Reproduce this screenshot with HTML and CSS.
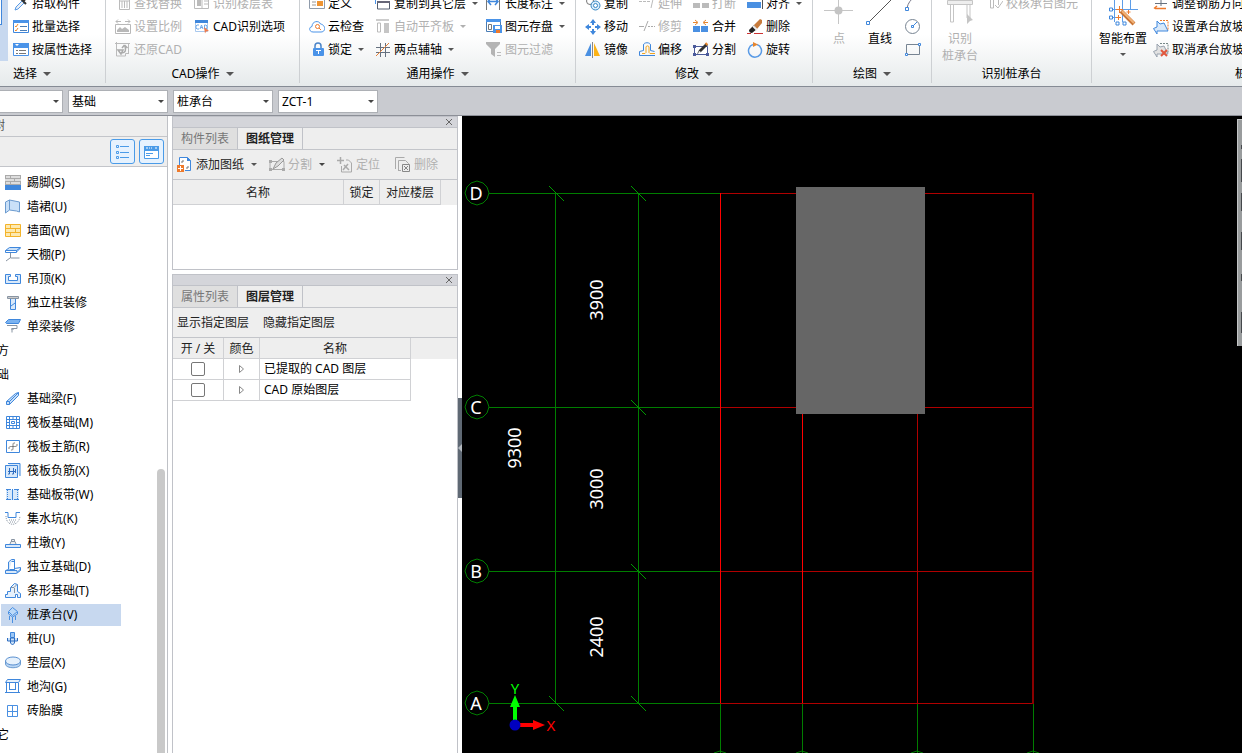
FILE: index.html
```html
<!DOCTYPE html>
<html lang="zh-CN">
<head>
<meta charset="utf-8">
<title>CAD</title>
<link rel="stylesheet" href="styles.css">
</head>
<body>
<svg class="sprite" aria-hidden="true">
<symbol id="pick" viewBox="0 0 16 16"><path d="M2 14l1-3 6-6 2 2-6 6z" fill="#e8eef6" stroke="#5a9be6"/><path d="M8 3l5 5M10 6l3-4" stroke="#333" stroke-width="2"/></symbol>
<symbol id="batch" viewBox="0 0 16 16"><path d="M.5 1.500h15v12H.5z" fill="#fff" stroke="#3f87dc"/><path d="M0 1h16v3H0z" fill="#4a93e8"/><path d="M2 7l1 1 2-3M2 11l1 1 2-3" fill="none" stroke="#ef8a2a"/><path d="M7 7.500h7M7 11.500h7" stroke="#4a7db5"/></symbol>
<symbol id="attr" viewBox="0 0 16 16"><path d="M.5 1.500h15v12H.5z" fill="#fff" stroke="#4a93e8"/><path d="M0 1h16v5H0z" fill="#4a93e8"/><path d="M2 2h4L4 4z" fill="#fff"/><path d="M3 8.500h2M6 8.500h7M3 11.500h2M6 11.500h7" stroke="#777"/></symbol>
<symbol id="find" viewBox="0 0 16 16"><path d="M4.500 1.500h10v12h-10zM7 5v7M9.500 5v7M12 5v7M5 5h9" fill="none" stroke="#bbb"/></symbol>
<symbol id="scale" viewBox="0 0 16 16"><path d="M1 2.500h5M10 2.500h5M3 .5l-2 2 2 2M13 .5l2 2-2 2M.5 5.500h15v9H.5z" fill="none" stroke="#b8b8b8"/><path d="M2 13V11l3-3 2 2 3-2 4 3v2z" fill="#b8b8b8"/></symbol>
<symbol id="restore" viewBox="0 0 16 16"><path d="M0 1.500h15M1.500 0v14h9M13.500 1v11M10.500 14v-2.500h3" fill="none" stroke="#bbb"/><path d="M6 11c5 0 5-3 4-7M9.500 3L7 6M9.500 3l3 3M3 8h5l-2 4z" fill="none" stroke="#aaa" stroke-width="1.500"/></symbol>
<symbol id="floors" viewBox="0 0 16 16"><path d="M.5 1.500h14v11H.5zM8 1v11M10 5h4M10 8h4" fill="none" stroke="#bbb"/><path d="M3 4h4v6H3z" fill="#bbb"/></symbol>
<symbol id="cadopt" viewBox="0 0 16 16"><path d="M1.500 2.500h12v10h-12z" fill="#fff" stroke="#a9c9ee"/><path d="M1 1h13v3H1z" fill="#3f87dc"/><path d="M5 6H3L2 7v2l1 1h2M6 10l1.500-4L9 10M7 8.500h2M10.500 6v4h1.500l1-1V7l-1-1z" fill="none" stroke="#6ea8ea"/><path d="M10 8l5 4-3 .5-1 2z" fill="#f07a4a"/></symbol>
<symbol id="define" viewBox="0 0 16 16"><path d="M.5 .5h15v12H.5z" fill="#fff" stroke="#8f9bab"/><path d="M2 2h12v2H2z" fill="#ccd5df"/><path d="M3 6h4M3 9h4" stroke="#999"/><path d="M8 5h6v5H8z" fill="#ee9433"/></symbol>
<symbol id="cloud" viewBox="0 0 16 16"><path d="M4 13C0 13-.5 8 3 7.500 3 2 10 1 11.500 5 17 6 17 13 12 13z" fill="#fff" stroke="#4a93e8"/><circle cx="8.500" cy="7.500" r="2" fill="none" stroke="#ee7a2c"/><path d="M10 9l2 2" stroke="#ee7a2c"/></symbol>
<symbol id="lock" viewBox="0 0 16 16"><path d="M6 7V4c0-4 6-4 6 0v3" fill="none" stroke="#4a84c8" stroke-width="1.500"/><rect x="4" y="6" width="11" height="8" rx="1" fill="#4a93e8"/><path d="M7 8.500h5M9.500 8v4" stroke="#fff"/></symbol>
<symbol id="copyfl" viewBox="0 0 16 16"><path d="M.5 8V1.500h12V4" fill="none" stroke="#4a93e8"/><path d="M2.500 5.500h12v7.500h-12z" fill="#fff" stroke="#555f70"/><path d="M2 5h13v2H2z" fill="#667"/></symbol>
<symbol id="align" viewBox="0 0 16 16"><path d="M1 0h13v2H1z" fill="#ccc"/><path d="M2.500 4v9h3V4z" fill="none" stroke="#bbb"/><path d="M9 4h5v10H9z" fill="#c5c5c5"/></symbol>
<symbol id="twopt" viewBox="0 0 16 16"><path d="M5.500 1v14M10.500 1v14M1 5.500h14M1 10.500h14" stroke="#66717f"/><path d="M1 14L14 1" stroke="#e68036"/></symbol>
<symbol id="dim" viewBox="0 0 16 16"><path d="M.5 1v13M13.500 1v13" stroke="#777"/><path d="M2 5.500h10M5 2L2 5.500 5 9M9 2l3 3.500L9 9" fill="none" stroke="#3f87dc" stroke-width="1.500"/></symbol>
<symbol id="save" viewBox="0 0 16 16"><path d="M.5 .5h14v12H.5z" fill="#fff" stroke="#4a7db5"/><path d="M0 0h15v3H0z" fill="#4a93e8"/><path d="M2.500 5.500h3v5h-3z" fill="none" stroke="#777"/><path d="M7 6h9v8H7z" fill="#4a93e8"/><path d="M9 7h5v3H9z" fill="#fff"/><path d="M10 11h4v3h-4z" fill="#ee7a2c"/></symbol>
<symbol id="filter" viewBox="0 0 16 16"><path d="M0 0h14v2L9 7v8l-4-3V7L0 2z" fill="#b4b4b4"/><path d="M11 10.500h4M11 13.500h4" stroke="#bbb"/></symbol>
<symbol id="copy" viewBox="0 0 16 16"><circle cx="5" cy="5" r="3.500" fill="#fff" stroke="#777"/><circle cx="10.500" cy="9.500" r="4.500" fill="#d8ecfb" stroke="#3989c4"/><circle cx="10.500" cy="9.500" r="2" fill="#fff" stroke="#3989c4"/></symbol>
<symbol id="move" viewBox="0 0 16 16"><path d="M8 0l3 4H9v2H7V4H5zM8 16l3-4H9v-2H7v2H5zM0 8l4-3v2h2v2H4v2zM16 8l-4-3v2h-2v2h2v2z" fill="#3f87dc"/></symbol>
<symbol id="mirror" viewBox="0 0 16 16"><path d="M6 1v13H0z" fill="#4a90e2"/><path d="M9 1v13h6z" fill="#fcb316"/><path d="M7.500 0v16" stroke="#888"/></symbol>
<symbol id="extend" viewBox="0 0 16 16"><path d="M0 5.500h3M4 5.500h3M8 5.500h3M12 12l2.500-11" stroke="#bbb" fill="none"/></symbol>
<symbol id="trim" viewBox="0 0 16 16"><path d="M0 7.500h5M5 12L9 2M9 7.500h2M12 7.500h2M15 7.500h1" stroke="#aaa"/></symbol>
<symbol id="offset" viewBox="0 0 16 16"><path d="M16 13.500H.5V9.500l4-1V3c0-3 7-3 7 0v5.500l4 1" fill="none" stroke="#3f87dc"/><path d="M3 11.500h3l1-1V5c0-1.500 3-1.500 3 0v5.500l1 1h5" fill="none" stroke="#f2a51e"/></symbol>
<symbol id="break" viewBox="0 0 16 16"><path d="M0 7h7v5H0zM9 7h7v5H9z" fill="#bbb"/><path d="M1 3.500h5M10 3.500h5" stroke="#bbb"/></symbol>
<symbol id="merge" viewBox="0 0 16 16"><path d="M0 7h7v6H0zM8 7h7v6H8z" fill="#4a90e2"/><path d="M0 3.500h4M2 1l3 2.500L2 6M15 3.500h-4M13 1l-3 2.500L13 6" fill="none" stroke="#e6862f"/></symbol>
<symbol id="split" viewBox="0 0 16 16"><path d="M1.500 4.500h13v8h-13z" fill="#fff" stroke="#4a5a9a"/><path d="M0 3h3v3H0zM13 11h3v3h-3zM0 11h3v3H0z" fill="#4a5a9a"/><path d="M4 12l2-4 7-7 2 2-7 7z" fill="#333"/><path d="M6 9l2 1-3 2z" fill="#fff"/><path d="M12.500 1l2 2" stroke="#e6862f" stroke-width="2"/></symbol>
<symbol id="alignb" viewBox="0 0 16 16"><path d="M2 0h11v4H2z" fill="#a7cdf4"/><path d="M0 6h14v6H0z" fill="#4a90e2"/><path d="M15.500 0v13" stroke="#555"/></symbol>
<symbol id="erase" viewBox="0 0 16 16"><path d="M0 14.500h4M7 14.500h9" stroke="#c33"/><path d="M2 11l5-5 3 4-5 4c-2 0-3-1-3-3z" fill="#222"/><path d="M7 6l6-6 2 1v3l-5 6z" fill="#c77b3c"/><path d="M6 7l4 4" stroke="#eee" stroke-width="2"/></symbol>
<symbol id="rotate" viewBox="0 0 16 16"><path d="M10 2.500a6.500 6.500 0 1 1-4 0" fill="none" stroke="#5a9be6" stroke-width="1.500"/><path d="M6 0l5 2.500L6 5z" fill="#e6862f"/></symbol>
<symbol id="point" viewBox="0 0 30 30"><path d="M14.500 0v28M0 14.500h29" stroke="#c6c6c6"/><circle cx="14.500" cy="14.500" r="4" fill="#c4c4c4"/></symbol>
<symbol id="line" viewBox="0 0 30 30"><path d="M4 26L29 1" stroke="#555"/><path d="M1.500 25.500h3v3h-3z" fill="#fff" stroke="#3f87dc"/></symbol>
<symbol id="arc" viewBox="0 0 16 16"><path d="M2 12C3 7 6 3 10 1" fill="none" stroke="#778"/><path d="M.5 11.500h3v3h-3z" fill="#fff" stroke="#3f87dc"/></symbol>
<symbol id="circ" viewBox="0 0 16 16"><circle cx="7.500" cy="7.500" r="7" fill="none" stroke="#778492"/><path d="M8 7l4-4" stroke="#3f87dc"/><path d="M6.500 6.500h2v2h-2z" fill="#fff" stroke="#3f87dc"/></symbol>
<symbol id="rect" viewBox="0 0 16 16"><path d="M1.500 2.500h13v10h-13z" fill="none" stroke="#778492"/><path d="M.5 11.500h2v2h-2zM13.500 1.500h2v2h-2z" fill="#fff" stroke="#3f87dc"/></symbol>
<symbol id="pile" viewBox="0 0 30 30"><path d="M2.500 4.500h25v4h-25z" fill="#eee" stroke="#c5c5c5"/><path d="M5.500 9v17h3V9M22 9v13h3V9" fill="none" stroke="#c5c5c5"/><path d="M22 18l6 6-3 1-3 3z" fill="#c5c5c5"/></symbol>
<symbol id="check" viewBox="0 0 16 16"><path d="M0 3.500h15M3.500 3v9h3V3M11.500 3v6M8 9l3 3 5-7" fill="none" stroke="#bbb"/></symbol>
<symbol id="smart" viewBox="0 0 30 30"><path d="M0 3.500h30M3 13.500h27M3 21.500h9M6.500 0v26M14.500 0v26M22.500 0v14" stroke="#5d9de8"/><path d="M1.500 12h3v3h-3zM1.500 20h3v3h-3zM8 26h3v3H8zM15 26h3v3h-3z" fill="#fff" stroke="#3f87dc"/><path d="M13 15l13 13" stroke="#c87434" stroke-width="4"/><path d="M14 15l12 12" stroke="#f1b277" stroke-width="2"/><path d="M11.500 10v7M8 13.500h7M10.500 19v5M8 21.500h5M20.500 14v4M18.500 16h4" stroke="#ee7a2c"/></symbol>
<symbol id="rebar" viewBox="0 0 16 16"><path d="M3 2.500h9l-3-3M2 7.500h12M8 2v8" fill="none" stroke="#66717f"/><path d="M2 12.500h11M4 10l-3 2.500" stroke="#ee7a2c" stroke-width="1.500"/></symbol>
<symbol id="slope" viewBox="0 0 16 16"><path d="M.5 9.500L4 8V2l3 3 4-1 4 8H4v3z" fill="#d9e9fa" stroke="#3f87dc"/><path d="M7 1.500h8V11" fill="none" stroke="#ee7a2c" stroke-dasharray="2 1"/></symbol>
<symbol id="noslope" viewBox="0 0 16 16"><path d="M.5 9.500L4 8V2l3 3 4-1 4 8H4v3z" fill="#e2e2e2" stroke="#98a2ae"/><path d="M7 1.500h8V11" fill="none" stroke="#788" stroke-dasharray="2 1"/><path d="M8 8l6 6M14 8l-6 6" stroke="#e2573c" stroke-width="2"/></symbol>
<symbol id="list" viewBox="0 0 16 16"><path d="M1.500 1.500h2v2h-2zM1.500 7.500h2v2h-2zM1.500 12.500h2v2h-2zM5 2.500h9M5 8.500h9M5 13.500h9" fill="none" stroke="#4a9be8"/></symbol>
<symbol id="card" viewBox="0 0 16 16"><path d="M.5 2.500h14v12H.5z" fill="#fff" stroke="#4a9be8"/><path d="M0 2h15v5H0z" fill="#4a9be8"/><path d="M2 4h2M5 4h1M7 4h1M11 4h2" stroke="#fff"/><path d="M2 9.500h7M2 11.500h4" stroke="#4a9be8"/></symbol>
<symbol id="t-skirt" viewBox="0 0 16 16"><path d="M0 0h16v10H0z" fill="#aaa"/><path d="M1 1h4v2H1zM6 1h9v2H6zM0 4h9v2H0zM10 4h6v2h-6zM1 7h4v2H1zM6 7h9v2H6z" fill="#ddd"/><path d="M0 10h16v5H0z" fill="#3f87dc"/></symbol>
<symbol id="t-dado" viewBox="0 0 16 16"><path d="M.5 3l4-2v10l-4 3zM4.500 1l10 2v10l-3-1-7-1z" fill="#c9e0f8" stroke="#6c9bcf"/></symbol>
<symbol id="t-wall" viewBox="0 0 16 16"><path d="M.5 1.500h15v12H.5zM0 5.500h16M0 9.500h16M5.500 1v4M10.500 5v4M5.500 9v4" fill="#fde9b0" stroke="#f3b32a"/></symbol>
<symbol id="t-ceil" viewBox="0 0 16 16"><path d="M.5 3.500l4-3h11l-4 3z" fill="#c9e0f8" stroke="#3f87dc"/><path d="M.5 3.500h11v2H.5zM11.500 5l4-4" fill="#fff" stroke="#3f87dc"/><path d="M5.500 6v5h9M5 11l-4 3" fill="none" stroke="#8894a2"/></symbol>
<symbol id="t-drop" viewBox="0 0 16 16"><path d="M.5 3.500h5v2h-2v4h9v-4h-2v-2h5v9H.5z" fill="#d9e9fa" stroke="#3f87dc"/></symbol>
<symbol id="t-col" viewBox="0 0 16 16"><path d="M2.500 1.500h11v2h-11z" fill="#ccc" stroke="#8894a2"/><path d="M5.500 4v10.500h5V4M6 11l4-3" fill="#d9e9fa" stroke="#3f87dc"/></symbol>
<symbol id="t-beam" viewBox="0 0 16 16"><path d="M.5 3.500l3-3h12l-2 4h-12z" fill="#7ab2f0" stroke="#3f87dc"/><path d="M2 6.500h10v3H7v4M6 10h3" fill="none" stroke="#8894a2"/></symbol>
<symbol id="t-fbeam" viewBox="0 0 16 16"><path d="M1.500 10.500l9-8 3-1v3l-9 9h-3zM1.500 10.500h3v3M4.500 10.500l9-9" fill="#c9e0f8" stroke="#3f87dc"/></symbol>
<symbol id="t-raft" viewBox="0 0 16 16"><path d="M1.500 1.500h13v12h-13zM4.500 1v13M11.500 1v13M1 4.500h14M1 10.500h14M6.500 6.500h3v2h-3zM8 1v3M8 11v3M1 7.500h3M12 7.500h3" fill="none" stroke="#3f87dc"/></symbol>
<symbol id="t-main" viewBox="0 0 16 16"><path d="M1.500 1.500h13v12h-13z" fill="#fff" stroke="#3f87dc"/><path d="M4 10c0-2.500 0-2.500 4-2.500s4 0 4-2.500M10 4c-2 0-2 0-2 3.500s0 3.500-2 3.500" fill="none" stroke="#777"/></symbol>
<symbol id="t-neg" viewBox="0 0 16 16"><path d="M3 .5h12V13M.5 2.500h12v12H.5z" fill="#d9e9fa" stroke="#3f87dc"/><path d="M4.500 5v6H3M8.500 5v6H7M3 8.500h8M10.500 6v4" fill="none" stroke="#2d6cc0"/></symbol>
<symbol id="t-strip" viewBox="0 0 16 16"><path d="M1 3h13v10H1z" fill="#d9e9fa"/><path d="M1 2.500h5M9 2.500h5M1 12.500h5M9 12.500h5M7.500 2v11" stroke="#3f87dc"/><path d="M2.500 3v10M12.500 3v10" stroke="#3f87dc" stroke-dasharray="1 1"/></symbol>
<symbol id="t-sump" viewBox="0 0 16 16"><path d="M0 1.500h3v5h8v-5h4" fill="none" stroke="#3f87dc"/><path d="M1 5c0 11 13 11 14 0M4 9h8M5 11h6" fill="none" stroke="#8894a2" stroke-dasharray="1 1"/></symbol>
<symbol id="t-pier" viewBox="0 0 16 16"><path d="M.5 9.500h15v3H.5z" fill="#d9e9fa" stroke="#3f87dc"/><path d="M5 9l1-2.500h4l1 2.500M6.500 6V4.500h3V6" fill="#eee" stroke="#8894a2"/></symbol>
<symbol id="t-iso" viewBox="0 0 16 16"><path d="M.5 14.500v-3l3-1V3l3-2.500h3v9l6-1v3l-4 3zM4.500 10.500h5V2.500h-3M9.500 10L8 12M1 11.500h11v2l4-4" fill="#d9e9fa" stroke="#3f87dc"/></symbol>
<symbol id="t-cont" viewBox="0 0 16 16"><path d="M.5 14.500v-3h2v-3h3v-4l4-4 3 1v7l3 2v4h-3v-3h-2v3z" fill="#e6f1fc" stroke="#3f87dc"/><path d="M6 4.500h3l3-3M9.500 5v5" fill="none" stroke="#8894a2"/></symbol>
<symbol id="t-cap" viewBox="0 0 16 16"><path d="M3.500 4.500l4-4 5 4-5 4z" fill="#bcd9f8" stroke="#4a90e2"/><path d="M3.500 5v2l4 3 5-3V5M4.500 9v4M7.500 10v6M10.500 9v4" fill="none" stroke="#4a90e2"/></symbol>
<symbol id="t-pile" viewBox="0 0 16 16"><path d="M5.500 1.500h4v5h-4z" fill="#9cc6f4" stroke="#3f87dc"/><path d="M2.500 7v3h10V7M5.500 7v5l2 2 2-2V7z" fill="#c9e0f8" stroke="#2d6cc0"/></symbol>
<symbol id="t-cush" viewBox="0 0 16 16"><path d="M.5 6v3c0 5 15 5 15 0V6" fill="#b9d6f5" stroke="#6c9bcf"/><ellipse cx="8" cy="6" rx="7.500" ry="4" fill="#e6f1fc" stroke="#5a90d0"/></symbol>
<symbol id="t-ditch" viewBox="0 0 16 16"><path d="M.5 3.500l2-3h13l-2 3zM1.500 4v10M4.500 4v7M10.500 4v7M13.500 4v10M0 13.500h15M4 10.500h7" fill="#e6f1fc" stroke="#3f87dc"/></symbol>
<symbol id="t-brick" viewBox="0 0 16 16"><path d="M2.500 2.500h10v11h-10zM7.500 2v11M3 8.500h10" fill="#fff" stroke="#4a90e2"/></symbol>
<symbol id="adddoc" viewBox="0 0 16 16"><path d="M2.500 8V.5h8l3 3v10H8" fill="#fff" stroke="#3f87dc"/><path d="M10 0v4h4z" fill="#3f87dc"/><path d="M5 6V4h2M9 11h2V9" fill="none" stroke="#777"/><path d="M0 8h7v7H0z" fill="#ee7a2c"/><path d="M1 11.500h5M3.500 9v5" stroke="#fff"/></symbol>
<symbol id="gsplit" viewBox="0 0 16 16"><path d="M1 4.500h14v8H1z" fill="none" stroke="#aaa"/><path d="M0 3h3v3H0zM0 11h3v3H0zM13 11h3v3h-3z" fill="#aaa"/><path d="M4 12l3-6 6-5 2 2-6 6z" fill="#ddd" stroke="#999"/></symbol>
<symbol id="locate" viewBox="0 0 16 16"><path d="M4.500 9v6h10V6l-3-3H9" fill="none" stroke="#aaa"/><path d="M3.500 0v7M0 3.500h7M7 8l5 5M11 7l-5 6" stroke="#aaa" stroke-width="1.500"/></symbol>
<symbol id="gdel" viewBox="0 0 16 16"><path d="M.5 12V.5h9M3.500 13.500v-10h7l3 3v1M3 13.500h3" fill="none" stroke="#aaa"/><path d="M7.500 7.500h7v7h-7zM9 9l4 4M13 9l-4 4" fill="none" stroke="#888"/></symbol>
</svg>

<header class="ribbon">
  <section class="group g-select">
    <div class="cols">
      <div class="cut-tool"><span class="cut-icon"></span></div>
      <div class="col">
        <button><svg class="ic"><use href="#pick"/></svg>拾取构件</button>
        <button><svg class="ic"><use href="#batch"/></svg>批量选择</button>
        <button><svg class="ic"><use href="#attr"/></svg>按属性选择</button>
      </div>
    </div>
    <h2>选择<i class="caret"></i></h2>
  </section>
  <section class="group g-cad">
    <div class="cols">
      <div class="col">
        <button disabled><svg class="ic"><use href="#find"/></svg>查找替换</button>
        <button disabled><svg class="ic"><use href="#scale"/></svg>设置比例</button>
        <button disabled><svg class="ic"><use href="#restore"/></svg>还原CAD</button>
      </div>
      <div class="col">
        <button disabled><svg class="ic"><use href="#floors"/></svg>识别楼层表</button>
        <button><svg class="ic"><use href="#cadopt"/></svg>CAD识别选项</button>
        <span class="blank"></span>
      </div>
    </div>
    <h2>CAD操作<i class="caret"></i></h2>
  </section>
  <section class="group g-common">
    <div class="cols">
      <div class="col">
        <button><svg class="ic"><use href="#define"/></svg>定义</button>
        <button><svg class="ic"><use href="#cloud"/></svg>云检查</button>
        <button><svg class="ic"><use href="#lock"/></svg>锁定<i class="caret small"></i></button>
      </div>
      <div class="col">
        <button><svg class="ic"><use href="#copyfl"/></svg>复制到其它层<i class="caret small"></i></button>
        <button disabled><svg class="ic"><use href="#align"/></svg>自动平齐板<i class="caret small"></i></button>
        <button><svg class="ic"><use href="#twopt"/></svg>两点辅轴<i class="caret small"></i></button>
      </div>
      <div class="col">
        <button><svg class="ic"><use href="#dim"/></svg>长度标注<i class="caret small"></i></button>
        <button><svg class="ic"><use href="#save"/></svg>图元存盘<i class="caret small"></i></button>
        <button disabled><svg class="ic"><use href="#filter"/></svg>图元过滤</button>
      </div>
    </div>
    <h2>通用操作<i class="caret"></i></h2>
  </section>
  <section class="group g-modify">
    <div class="cols">
      <div class="col">
        <button><svg class="ic"><use href="#copy"/></svg>复制</button>
        <button><svg class="ic"><use href="#move"/></svg>移动</button>
        <button><svg class="ic"><use href="#mirror"/></svg>镜像</button>
      </div>
      <div class="col">
        <button disabled><svg class="ic"><use href="#extend"/></svg>延伸</button>
        <button disabled><svg class="ic"><use href="#trim"/></svg>修剪</button>
        <button><svg class="ic"><use href="#offset"/></svg>偏移</button>
      </div>
      <div class="col">
        <button disabled><svg class="ic"><use href="#break"/></svg>打断</button>
        <button><svg class="ic"><use href="#merge"/></svg>合并</button>
        <button><svg class="ic"><use href="#split"/></svg>分割</button>
      </div>
      <div class="col">
        <button><svg class="ic"><use href="#alignb"/></svg>对齐<i class="caret small"></i></button>
        <button><svg class="ic"><use href="#erase"/></svg>删除</button>
        <button><svg class="ic"><use href="#rotate"/></svg>旋转</button>
      </div>
    </div>
    <h2>修改<i class="caret"></i></h2>
  </section>
  <section class="group g-draw">
    <div class="cols">
      <button class="big" disabled><svg class="bic"><use href="#point"/></svg><span>点</span></button>
      <button class="big"><svg class="bic"><use href="#line"/></svg><span>直线</span></button>
      <div class="col">
        <button aria-label="弧"><svg class="ic"><use href="#arc"/></svg></button>
        <button aria-label="圆"><svg class="ic"><use href="#circ"/></svg></button>
        <button aria-label="矩形"><svg class="ic"><use href="#rect"/></svg></button>
      </div>
    </div>
    <h2>绘图<i class="caret"></i></h2>
  </section>
  <section class="group g-recog">
    <div class="cols">
      <button class="big" disabled><svg class="bic"><use href="#pile"/></svg><span>识别</span><span>桩承台</span></button>
      <div class="col">
        <button disabled><svg class="ic"><use href="#check"/></svg>校核承台图元</button>
        <span class="blank"></span>
        <span class="blank"></span>
      </div>
    </div>
    <h2>识别桩承台</h2>
  </section>
  <section class="group g-second">
    <div class="cols">
      <button class="big"><svg class="bic"><use href="#smart"/></svg><span>智能布置</span><i class="caret small"></i></button>
      <div class="col">
        <button><svg class="ic"><use href="#rebar"/></svg>调整钢筋方向</button>
        <button><svg class="ic"><use href="#slope"/></svg>设置承台放坡</button>
        <button><svg class="ic"><use href="#noslope"/></svg>取消承台放坡</button>
      </div>
    </div>
    <h2>桩承台二次编辑</h2>
  </section>
</header>

<nav class="filters">
  <div class="pick first"><select aria-label="楼层"><option></option></select></div>
  <div class="pick"><select aria-label="类别"><option>基础</option></select></div>
  <div class="pick"><select aria-label="构件类型"><option>桩承台</option></select></div>
  <div class="pick"><select aria-label="构件"><option>ZCT-1</option></select></div>
</nav>

<main class="work">
  <aside class="tree">
    <div class="tree-title"><span>树</span></div>
    <div class="tree-tools">
      <button aria-label="列表"><svg class="ic"><use href="#list"/></svg></button>
      <button aria-label="卡片"><svg class="ic"><use href="#card"/></svg></button>
    </div>
    <div class="tree-body">
      <ul>
        <li><svg class="ic"><use href="#t-skirt"/></svg>踢脚(S)</li>
        <li><svg class="ic"><use href="#t-dado"/></svg>墙裙(U)</li>
        <li><svg class="ic"><use href="#t-wall"/></svg>墙面(W)</li>
        <li><svg class="ic"><use href="#t-ceil"/></svg>天棚(P)</li>
        <li><svg class="ic"><use href="#t-drop"/></svg>吊顶(K)</li>
        <li><svg class="ic"><use href="#t-col"/></svg>独立柱装修</li>
        <li><svg class="ic"><use href="#t-beam"/></svg>单梁装修</li>
        <li class="cat">方</li>
        <li class="cat">础</li>
        <li><svg class="ic"><use href="#t-fbeam"/></svg>基础梁(F)</li>
        <li><svg class="ic"><use href="#t-raft"/></svg>筏板基础(M)</li>
        <li><svg class="ic"><use href="#t-main"/></svg>筏板主筋(R)</li>
        <li><svg class="ic"><use href="#t-neg"/></svg>筏板负筋(X)</li>
        <li><svg class="ic"><use href="#t-strip"/></svg>基础板带(W)</li>
        <li><svg class="ic"><use href="#t-sump"/></svg>集水坑(K)</li>
        <li><svg class="ic"><use href="#t-pier"/></svg>柱墩(Y)</li>
        <li><svg class="ic"><use href="#t-iso"/></svg>独立基础(D)</li>
        <li><svg class="ic"><use href="#t-cont"/></svg>条形基础(T)</li>
        <li class="on"><svg class="ic"><use href="#t-cap"/></svg>桩承台(V)</li>
        <li><svg class="ic"><use href="#t-pile"/></svg>桩(U)</li>
        <li><svg class="ic"><use href="#t-cush"/></svg>垫层(X)</li>
        <li><svg class="ic"><use href="#t-ditch"/></svg>地沟(G)</li>
        <li><svg class="ic"><use href="#t-brick"/></svg>砖胎膜</li>
        <li class="cat">它</li>
      </ul>
      <div class="track"><div class="thumb"></div></div>
    </div>
  </aside>

  <div class="docks">
    <section class="dock drawings">
      <div class="bar"><button aria-label="关闭"><svg viewBox="0 0 8 8"><path d="M1 1l6 6M7 1L1 7"/></svg></button></div>
      <div class="tabs"><button>构件列表</button><button class="on">图纸管理</button></div>
      <div class="tools">
        <button class="t-add"><svg class="ic"><use href="#adddoc"/></svg>添加图纸<i class="caret small"></i></button>
        <button class="t-split" disabled><svg class="ic"><use href="#gsplit"/></svg>分割<i class="caret small dark"></i></button>
        <button class="t-loc" disabled><svg class="ic"><use href="#locate"/></svg>定位</button>
        <button disabled><svg class="ic"><use href="#gdel"/></svg>删除</button>
      </div>
      <div class="sheet">
        <table>
          <colgroup><col class="c171"><col class="c36"><col class="c61"></colgroup>
          <thead><tr><th>名称</th><th>锁定</th><th>对应楼层</th></tr></thead>
        </table>
      </div>
    </section>
    <section class="dock layers">
      <div class="bar"><button aria-label="关闭"><svg viewBox="0 0 8 8"><path d="M1 1l6 6M7 1L1 7"/></svg></button></div>
      <div class="tabs"><button>属性列表</button><button class="on">图层管理</button></div>
      <div class="tools wide"><button>显示指定图层</button><button>隐藏指定图层</button></div>
      <div class="sheet">
        <table>
          <colgroup><col class="c51"><col class="c36"><col class="c151"></colgroup>
          <thead><tr><th>开 / 关</th><th>颜色</th><th>名称</th></tr></thead>
          <tbody>
            <tr><td><input type="checkbox" id="l1"></td><td><svg class="tri" viewBox="0 0 8 8"><path d="M1.500 .5L5.500 4l-4 3.500z"/></svg></td><td class="name"><label for="l1">已提取的 CAD 图层</label></td></tr>
            <tr><td><input type="checkbox" id="l2"></td><td><svg class="tri" viewBox="0 0 8 8"><path d="M1.500 .5L5.500 4l-4 3.500z"/></svg></td><td class="name"><label for="l2">CAD 原始图层</label></td></tr>
          </tbody>
        </table>
      </div>
    </section>
  </div>

  <button class="splitter" aria-label="折叠"><svg viewBox="0 0 4 8"><path d="M4 0L0 4l4 4z"/></svg></button>

  <div class="canvas">
    <svg class="plan">
      <defs>
        <polygon id="bubble" points="12,0 10,6 6,10 0,12 -6,10 -10,6 -12,0 -10,-6 -6,-10 0,-12 6,-10 10,-6"/>
        <path id="tick" d="M-7-7L8 8"/>
      </defs>
      <g class="green crisp">
        <path d="M27 77.500h231M27 291.500h231M27 455.500h231M27 587.500h231M93.500 77v510M176.500 77v510M258.500 587v60M340.500 587v60M455.500 587v60M571.500 587v60"/>
      </g>
      <g class="axis crisp"><path d="M258 77.500h313M258 291.500h313M258 455.500h313M258 587.500h313M455.500 291v296"/></g>
      <g class="red crisp"><path d="M258.500 77v510M340.500 291v296"/></g>
      <path class="edge crisp" d="M571 77v511"/>
      <g class="green">
        <use href="#bubble" x="15" y="77"/><use href="#bubble" x="15" y="291"/><use href="#bubble" x="15" y="455"/><use href="#bubble" x="15" y="587"/>
        <use href="#bubble" x="258" y="647"/><use href="#bubble" x="340" y="647"/><use href="#bubble" x="455" y="647"/><use href="#bubble" x="571" y="647"/>
      </g>
      <g class="green tick">
        <use href="#tick" x="94" y="77"/><use href="#tick" x="176" y="77"/><use href="#tick" x="176" y="291"/><use href="#tick" x="176" y="455"/><use href="#tick" x="94" y="587"/><use href="#tick" x="176" y="587"/>
      </g>
      <rect x="334" y="71" width="129" height="227" fill="#666"/>
      <g class="mark"><text x="14" y="84">D</text><text x="14" y="298">C</text><text x="14" y="462">B</text><text x="14" y="594">A</text></g>
      <g class="mark">
        <text transform="translate(141 184) rotate(-90)">3900</text>
        <text transform="translate(59 332) rotate(-90)">9300</text>
        <text transform="translate(141 373) rotate(-90)">3000</text>
        <text transform="translate(141 521) rotate(-90)">2400</text>
      </g>
      <path d="M53 609V590" stroke="#0f0" stroke-width="4"/><path d="M48 591l5-12 5 12z" fill="#0f0"/>
      <path d="M53 609h20" stroke="#f00" stroke-width="4"/><path d="M71 604l12 5-12 5z" fill="#f00"/>
      <circle cx="53" cy="609" r="5.500" fill="#0000c0"/>
      <text class="axis-name y" x="53" y="578">Y</text>
      <text class="axis-name x" x="89" y="615">X</text>
    </svg>
    <svg class="float-bar" viewBox="0 0 5 227" aria-hidden="true">
      <path d="M0 0h5v227H0z" fill="#999c9d"/><path d="M.5 0v227M0 .5h5" stroke="#c4c6c7"/>
      <path d="M4.500 26v4M4.500 40v23M4.500 74v18M4.500 113v18M4.500 155v7M4.500 193v21" stroke="#45484c"/>
    </svg>
  </div>
</main>
</body>
</html>
```
FILE: styles.css
```css
* { box-sizing: border-box; }

body {
  margin: 0;
  height: 100vh;
  display: flex;
  flex-direction: column;
  overflow: hidden;
  background: #fff;
  color: #000;
  font: 12px/16px "Noto Sans", "Noto Sans CJK SC", sans-serif;
}

button {
  display: flex;
  align-items: center;
  padding: 0;
  border: 0;
  background: none;
  color: inherit;
  font: inherit;
  white-space: nowrap;
}

button:disabled { color: #b0b0b0; }

.sprite { display: none; }

.ic {
  flex: none;
  width: 16px;
  height: 16px;
}

.caret {
  flex: none;
  margin-left: 6px;
  border: 4px solid transparent;
  border-top-color: #555;
  border-bottom-width: 0;
}

.caret.small {
  margin-left: 7px;
  border-width: 3px 3px 0;
}

button:disabled .caret { border-top-color: #b0b0b0; }
button:disabled .caret.dark { border-top-color: #444; }

/* Ribbon */
.ribbon {
  flex: none;
  display: flex;
  align-items: flex-end;
  height: 87px;
  overflow: hidden;
  border-bottom: 1px solid #858b94;
  background: linear-gradient(#fff 40%, #e6eaeb);
}

.group {
  flex: none;
  display: flex;
  flex-direction: column;
  border-right: 1px solid #cdd0d3;
  margin-bottom: 3px;
}

.cols {
  display: flex;
  height: 69px;
}

.group h2 {
  display: flex;
  align-items: center;
  justify-content: center;
  height: 22px;
  margin: 0;
  padding-top: 3px;
  font-size: 12px;
  font-weight: 400;
  white-space: nowrap;
}

.col button, .blank {
  display: flex;
  gap: 3px;
  height: 23px;
}

.col .caret.small { margin-left: 3px; }

.big {
  flex-direction: column;
  height: 69px;
  line-height: 17px;
}

.bic {
  flex: none;
  width: 30px;
  height: 30px;
  margin: 4px 0;
}

.big .caret.small { margin: 6px 0 0; }

.g-select { width: 106px; }
.g-select .cols { gap: 5px; }
.g-select h2 { justify-content: flex-start; padding-left: 13px; }
.cut-tool { width: 8px; background: #c7d8ef; }
.cut-icon { display: block; width: 2px; height: 33px; background: #fff; border-right: 1px solid #3f87dc; border-bottom: 1px solid #3f87dc; }

.g-cad { width: 194px; }
.g-cad .cols { padding-left: 9px; }
.g-cad .col:first-child { width: 79px; }

.g-common { width: 276px; }
.g-common .cols { padding-left: 9px; }
.g-common .col:nth-child(1) { width: 66px; }
.g-common .col:nth-child(2) { width: 111px; }

.g-modify { width: 237px; }
.g-modify .cols { padding-left: 9px; }
.g-modify .col { width: 54px; }

.g-draw { width: 119px; }
.g-draw .cols { padding-left: 10px; }
.g-draw .big { width: 32px; }
.g-draw .big + .big { width: 50px; }

.g-recog { width: 160px; }
.g-recog .cols { padding-left: 10px; }
.g-recog .big { width: 36px; }
.g-recog .col { padding-left: 9px; }

.g-second { width: 370px; border: 0; }
.g-second .cols { padding-left: 7px; }
.g-second .col { padding-left: 6px; }
.g-second h2 { justify-content: flex-start; padding-left: 143px; }

/* Filter strip */
.filters {
  flex: none;
  display: flex;
  gap: 5px;
  height: 29px;
  padding-top: 3px;
  border-bottom: 1px solid #8c8f97;
  background: #c9cbd0;
}

.pick {
  position: relative;
  width: 100px;
  height: 23px;
}

.pick.first { width: 63px; }

.pick select {
  appearance: none;
  width: 100%;
  height: 100%;
  padding: 0 3px;
  border: 1px solid #adb0b5;
  border-radius: 0;
  background: #fff;
  color: #000;
  font: inherit;
}

.pick.first select { border-left: 0; }

.pick::after {
  content: "";
  position: absolute;
  right: 4px;
  top: 10px;
  border: 3px solid transparent;
  border-top-color: #444;
  border-bottom-width: 0;
  pointer-events: none;
}

/* Work area */
.work {
  flex: 1;
  display: flex;
  min-height: 0;
}

.tree {
  flex: none;
  display: flex;
  flex-direction: column;
  width: 168px;
  border-right: 1px solid #bfc1c6;
}

.tree-title {
  height: 21px;
  padding-top: 2px;
  border-bottom: 1px solid #c3c5ca;
  background: #eee;
  color: #555;
}

.tree-title span { margin-left: -7px; }

.tree-tools {
  display: flex;
  justify-content: flex-end;
  gap: 4px;
  height: 30px;
  padding: 2px 3px;
  border-bottom: 1px solid #c3c5ca;
  background: #eee;
}

.tree-tools button {
  justify-content: center;
  width: 25px;
  height: 25px;
  border: 1px solid #4a9be8;
  border-radius: 3px;
  background: #e6f2fe;
}

.tree-body {
  flex: 1;
  display: flex;
  min-height: 0;
}

.tree ul {
  flex: 1;
  margin: 0;
  padding: 5px 0 0 1px;
  list-style: none;
}

.tree li {
  display: flex;
  align-items: center;
  gap: 6px;
  width: 120px;
  height: 22px;
  margin-bottom: 2px;
  padding-left: 4px;
  white-space: nowrap;
}

.tree li.on { background: #c7d8ef; }
.tree li.cat { margin-left: -8px; }

.track {
  width: 8px;
  margin-right: 2px;
  padding-top: 302px;
}

.thumb {
  height: 100%;
  border-radius: 4px 4px 0 0;
  background: #c9c9c9;
}

.docks {
  flex: none;
  display: flex;
  flex-direction: column;
  gap: 4px;
  width: 290px;
  padding-left: 4px;
}

.dock {
  display: flex;
  flex-direction: column;
  border: 1px solid #c0c2c8;
  background: #fff;
  color: #222;
}

.drawings { height: 154px; }
.layers { flex: 1; border-bottom: 0; }

.bar {
  flex: none;
  display: flex;
  justify-content: flex-end;
  height: 11px;
  padding-right: 4px;
  border-bottom: 1px solid #c0c2c8;
  background: #d4d5da;
}

.bar svg {
  width: 8px;
  height: 8px;
  fill: none;
  stroke: #666;
}

.tabs {
  flex: none;
  display: flex;
  height: 22px;
  border-bottom: 1px solid #c3c5ca;
  background: #eee;
}

.tabs button {
  justify-content: center;
  width: 65px;
  border-right: 1px solid #c0c2c8;
  background: #dfdfdf;
  color: #777;
}

.tabs .on {
  background: #eee;
  color: #222;
  font-weight: 700;
}

.tools {
  flex: none;
  display: flex;
  height: 30px;
  padding-left: 4px;
  border-bottom: 1px solid #c3c5ca;
  background: #eee;
}

.tools button { gap: 3px; }
.tools .caret.small { margin-left: 4px; }
.t-add { width: 92px; }
.t-split { width: 68px; }
.t-loc { width: 58px; }
.tools.wide { gap: 14px; }

.sheet { background: linear-gradient(#eee, #eee) no-repeat 0 0 / 100% 25px; }
.layers .sheet { background-size: 100% 21px; }

table {
  border-collapse: separate;
  border-spacing: 0;
  table-layout: fixed;
  width: 0;
}

.c171 { width: 171px; }
.c151 { width: 151px; }
.c61 { width: 61px; }
.c51 { width: 51px; }
.c36 { width: 36px; }

th, td {
  height: 21px;
  padding: 0;
  border-right: 1px solid #d0d1d4;
  border-bottom: 1px solid #d0d1d4;
  font-weight: 400;
  text-align: center;
  white-space: nowrap;
}

th { padding-top: 2px; }
.drawings th { height: 25px; }

td { background: #fff; color: #000; }
td.name { padding-left: 4px; text-align: left; }

input[type="checkbox"] {
  appearance: none;
  display: block;
  width: 14px;
  height: 14px;
  margin: 0 auto;
  border: 1px solid #777;
  border-radius: 2px;
  background: #fff;
}

.tri {
  display: block;
  width: 8px;
  height: 8px;
  margin: 0 auto;
  fill: none;
  stroke: #888;
}

.splitter {
  flex: none;
  align-self: flex-start;
  width: 4px;
  height: 100px;
  margin-top: 282px;
  background: #5f6974;
}

.splitter svg { width: 4px; height: 8px; fill: #b4bac0; }

/* Drawing canvas */
.canvas {
  position: relative;
  flex: 1;
  min-width: 0;
  background: #000;
}

.plan {
  display: block;
  width: 100%;
  height: 100%;
}

.crisp { shape-rendering: crispEdges; }
.green { fill: none; stroke: #007d00; }
.tick { stroke: #009a00; }
.axis { fill: none; stroke: #b00000; }
.red { fill: none; stroke: #f00; }
.edge { fill: none; stroke: #8a0000; stroke-width: 2; }

.mark {
  fill: #fff;
  font: 18px "Noto Sans", sans-serif;
  text-anchor: middle;
}

.axis-name {
  font: 15px "Noto Sans", sans-serif;
  text-anchor: middle;
}

.axis-name.x { fill: #f00; }
.axis-name.y { fill: #0f0; }

.float-bar {
  position: absolute;
  top: 3px;
  right: 0;
  width: 5px;
  height: 227px;
}
```
